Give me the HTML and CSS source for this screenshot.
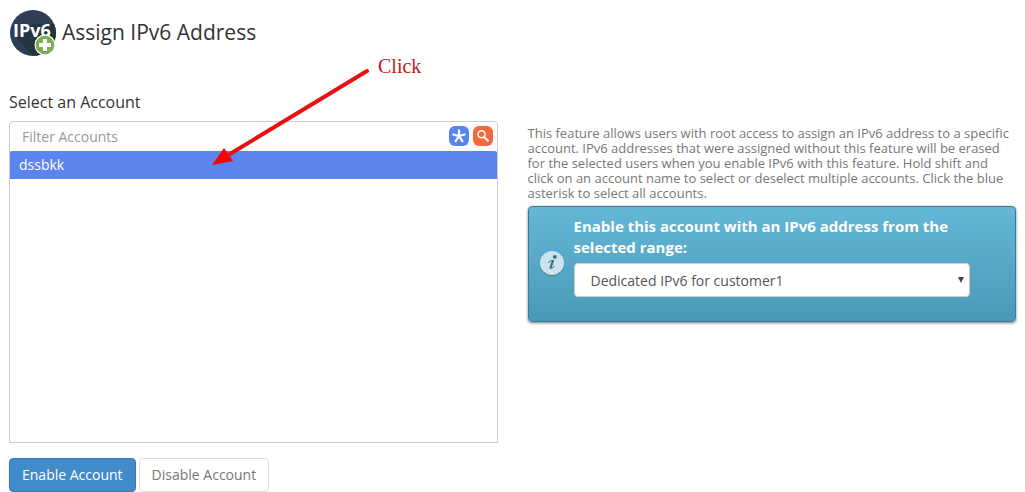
FILE: index.html
```html
<!DOCTYPE html>
<html lang="en">
<head>
<meta charset="utf-8">
<title>Assign IPv6 Address</title>
<meta name="viewport" content="width=device-width, initial-scale=1">
<link rel="stylesheet" href="styles.css">
</head>
<body>
<main class="page">
  <header class="page-header">
    <svg class="page-icon" viewBox="0 0 48 48" aria-hidden="true">
      <defs><clipPath id="disc"><circle cx="24" cy="24" r="23"/></clipPath></defs>
      <circle cx="24" cy="24" r="23" fill="#303d55"/>
      <path d="M7 29L24 15H48V48H26Z" fill="#253540" clip-path="url(#disc)"/>
      <text x="4" y="28" class="icon-text">IPv6</text>
      <circle cx="36" cy="36" r="10.5" fill="#fff"/>
      <circle cx="36" cy="36" r="9.3" fill="#7aad55"/>
      <path d="M36 30V42M30 36H42" stroke="#fff" stroke-width="4"/>
    </svg>
    <h1 class="page-title">Assign IPv6 Address</h1>
  </header>

  <div class="columns">
    <section class="accounts">
      <h2 class="section-title" id="accounts-title">Select an Account</h2>
      <div class="picker">
        <div class="filter">
          <input class="filter-input" type="text" placeholder="Filter Accounts" aria-label="Filter Accounts">
          <button class="tool tool-all" type="button" aria-label="Select all accounts">
            <svg viewBox="0 0 20 20"><path d="M10 10V3.500M10 10L3.500 8.200M10 10L16.500 8.200M10 10L6.200 15.800M10 10L13.800 15.800" stroke="#fff" stroke-width="2.200"/></svg>
          </button>
          <button class="tool tool-search" type="button" aria-label="Search">
            <svg viewBox="0 0 20 20" fill="none" stroke="#fff"><circle cx="8.500" cy="8.300" r="3.500" stroke-width="1.500"/><path d="M11 11L15.500 15.300" stroke-width="2"/></svg>
          </button>
        </div>
        <select class="account-list" multiple size="2" aria-labelledby="accounts-title">
          <option class="account" selected>dssbkk</option>
        </select>
      </div>
      <div class="actions">
        <button class="btn btn-primary" type="button">Enable Account</button>
        <button class="btn" type="button">Disable Account</button>
      </div>
    </section>

    <section class="info">
      <p class="description">This feature allows users with root access to assign an IPv6 address to a specific account. IPv6 addresses that were assigned without this feature will be erased for the selected users when you enable IPv6 with this feature. Hold shift and click on an account name to select or deselect multiple accounts. Click the blue asterisk to select all accounts.</p>
      <div class="callout">
        <svg class="info-icon" viewBox="0 0 26 26" aria-hidden="true">
          <circle cx="13" cy="14" r="12" fill="#397c97"/>
          <circle cx="13" cy="13" r="12" fill="#cce3ed"/>
          <circle cx="15.800" cy="6.900" r="1.900" fill="#377188"/>
          <path d="M9.300 12.500Q12 10 14.500 10.500L12 17.800Q11.500 19.500 15.500 16.200" fill="none" stroke="#377188" stroke-width="1"/>
          <path d="M14 10.500L11.200 18.500" stroke="#377188" stroke-width="2"/>
        </svg>
        <div class="callout-body">
          <label class="range-label" for="range">Enable this account with an IPv6 address from the selected range:</label>
          <div class="range-wrap">
            <select class="range" id="range"><option>Dedicated IPv6 for customer1</option></select>
            <svg class="caret" viewBox="0 0 6 6" aria-hidden="true"><path d="M0 0H6L3 6Z" fill="#444"/></svg>
          </div>
        </div>
      </div>
    </section>
  </div>

  <div class="annotation">
    <svg class="arrow" viewBox="0 0 160 100" aria-hidden="true">
      <path d="M155 4L18 87" stroke="#e8110f" stroke-width="4" stroke-linecap="round"/>
      <path d="M0 98L12 81L21 94Z" fill="#f00"/>
    </svg>
    <span class="annotation-text">Click</span>
  </div>
</main>
</body>
</html>
```
FILE: styles.css
```css
* { box-sizing: border-box; }
body {
  margin: 0;
  background: #fff;
  color: #333;
  font-family: "Open Sans", "Noto Sans", sans-serif;
  font-size: 14px;
}
button, input, select { font: inherit; }
.page { position: relative; padding: 9px 9px 0; }
.page-header { display: flex; align-items: center; gap: 5px; }
.page-icon { width: 48px; height: 48px; }
.icon-text { font: bold 18px "Open Sans", sans-serif; fill: #fff; }
.page-title { margin: 0; padding-bottom: 2px; font-size: 21px; font-weight: 400; line-height: 30px; }
.columns {
  display: grid;
  grid-template-columns: 1fr 1fr;
  gap: 30px;
  margin-top: 34px;
}
.section-title { margin: 0 0 8px; font-size: 16px; font-weight: 400; line-height: 22px; }
.picker { border: 1px solid #ccc; border-radius: 4px 4px 0 0; }
.filter {
  display: flex;
  align-items: center;
  gap: 4px;
  height: 29px;
  padding: 0 4px 1px 12px;
}
.filter-input {
  flex: 1;
  min-width: 0;
  padding: 0;
  border: 0;
  outline: 0;
  background: none;
  color: #555;
}
.filter-input::placeholder { color: #999; opacity: 1; }
.tool {
  width: 20px;
  height: 20px;
  padding: 0;
  border: 0;
  border-radius: 6px;
}
.tool svg { display: block; width: 20px; height: 20px; fill: none; }
.tool-all { background: #5b84ec; }
.tool-search { background: #f4693a; }
.account-list {
  display: block;
  width: 100%;
  height: 291px;
  padding: 0;
  border: 0;
  outline: 0;
  background: #fff;
  overflow: hidden;
}
.account { height: 28px; padding: 4px 9px; }
.account:checked {
  background: linear-gradient(#5b84ec, #5b84ec);
  color: #fff;
  -webkit-text-fill-color: #fff;
}
.actions { display: flex; gap: 3px; margin-top: 15px; }
.btn {
  height: 34px;
  padding: 0 12px 2px;
  border: 1px solid #ddd;
  border-radius: 4px;
  background: #fff;
  color: #777;
}
.btn-primary { border-color: #357ebd; background: #428bca; color: #fff; }
.info { padding-top: 35px; }
.description { margin: 0; color: #777; font-size: 13px; line-height: 15px; }
.callout {
  display: flex;
  align-items: center;
  gap: 9px;
  margin-top: 5px;
  padding: 9px 45px 24px 10px;
  border: 1px solid #397c97;
  border-radius: 4px;
  background: linear-gradient(#64b7d7, #4a99b8);
  box-shadow: 0 1px 3px #777;
}
.info-icon { flex: none; width: 26px; height: 26px; margin-top: 12px; }
.callout-body { flex: 1; min-width: 0; }
.range-label { display: block; color: #fff; font-size: 15px; font-weight: 700; line-height: 21px; }
.range-wrap { position: relative; margin-top: 5px; }
.range {
  display: block;
  width: 100%;
  height: 34px;
  padding: 0 24px 0 16px;
  border: 1px solid #ccc;
  border-radius: 4px;
  appearance: none;
  background: #fff;
  color: #555;
}
.caret { position: absolute; top: 14px; right: 6px; width: 6px; height: 6px; pointer-events: none; }
.annotation { position: absolute; top: 67px; left: 212px; pointer-events: none; }
.arrow { display: block; width: 160px; height: 100px; }
.annotation-text {
  position: absolute;
  top: -13px;
  left: 166px;
  color: #c81818;
  font: 20px/24px "Liberation Serif", serif;
}
```
